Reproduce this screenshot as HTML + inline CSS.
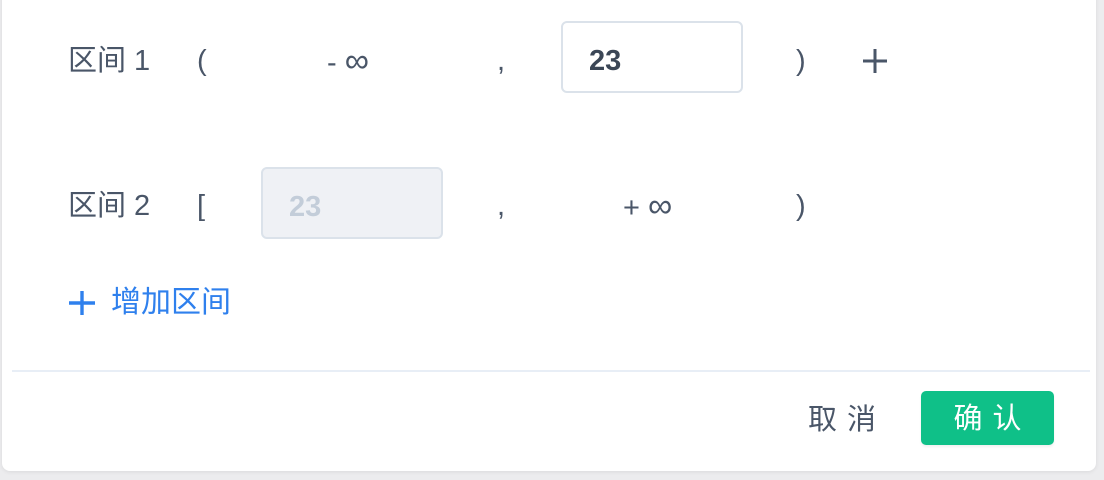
<!DOCTYPE html>
<html><head><meta charset="utf-8"><style>
body{margin:0;width:1104px;height:480px;background:#ececee;position:relative;overflow:hidden;font-family:"Liberation Sans","Noto Sans CJK SC",sans-serif;color:#4a5668}
.card{position:absolute;left:2px;top:-10px;width:1094px;height:481px;background:#fff;border-radius:8px;box-shadow:0 1px 4px rgba(0,0,0,.08)}
.t{position:absolute;font-size:29px;line-height:34px;white-space:nowrap}
.in{position:absolute;border:2px solid #dbe2ea;border-radius:6px;font-size:29px;line-height:76px;padding-left:26px;box-sizing:border-box;width:182px;height:72px;font-weight:bold}
.inf{font-size:34px}
</style></head><body>
<div class="card"></div>
<div class="t" style="left:68px;top:44px">区间 1</div>
<div class="t" style="left:197px;top:44px">(</div>
<div class="t" style="left:327px;top:44px">- <span class="inf">∞</span></div>
<div class="t" style="left:497px;top:44px">,</div>
<div class="in" style="left:561px;top:21px;color:#3b4656">23</div>
<div class="t" style="left:796px;top:44px">)</div>
<svg style="position:absolute;left:862px;top:48px" width="26" height="26"><path d="M13 1V25M1 13H25" stroke="#4a5668" stroke-width="3"/></svg>
<div class="t" style="left:68px;top:189px">区间 2</div>
<div class="t" style="left:197px;top:189px">[</div>
<div class="in" style="left:261px;top:167px;background:#eff1f5;color:#c3cdd9">23</div>
<div class="t" style="left:497px;top:189px">,</div>
<div class="t" style="left:623px;top:189px">+ <span class="inf">∞</span></div>
<div class="t" style="left:796px;top:189px">)</div>
<svg style="position:absolute;left:68px;top:290px" width="28" height="26"><path d="M14 1V25M1 13H27" stroke="#2f80ed" stroke-width="3.4"/></svg>
<div class="t" style="left:111px;top:286px;color:#2f80ed;font-size:30px">增加区间</div>
<div style="position:absolute;left:12px;top:370px;width:1078px;height:2px;background:#e8eef6"></div>
<div class="t" style="left:808px;top:403px;letter-spacing:10px">取消</div>
<div style="position:absolute;left:921px;top:391px;width:133px;height:54px;background:#0fc088;border-radius:5px;color:#fff;font-size:29px;line-height:56px;text-indent:10px;text-align:center;letter-spacing:10px;box-shadow:0 2px 2px rgba(0,0,0,.06)">确认</div>
</body></html>
